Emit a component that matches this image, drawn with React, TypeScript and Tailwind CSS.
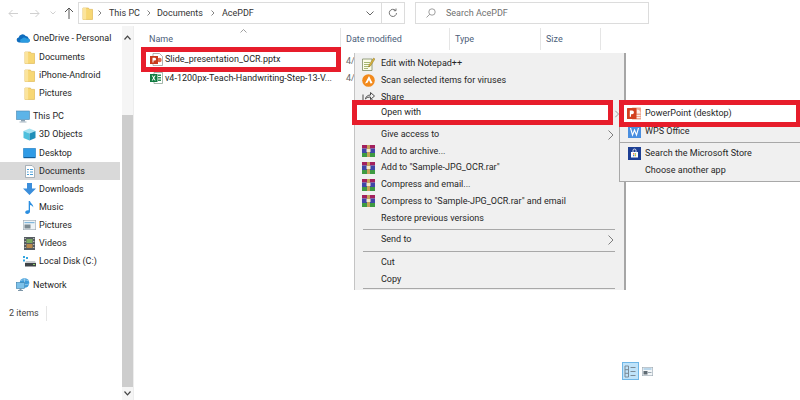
import React from "react";

const Folder = () => (
  <svg width="11" height="13" viewBox="0 0 12 14" className="shrink-0">
    <path d="M1 1h6l1 1.500h3.500v11H1z" fill="#f7d774" stroke="#dcb44f" strokeWidth="0.700" />
    <path d="M1 1h3.500v12.500H1z" fill="#fbe49c" />
  </svg>
);
const Cloud = () => (
  <svg width="14" height="10" viewBox="0 0 14 10" className="shrink-0">
    <path d="M3 9.500a2.600 2.600 0 0 1-.4-5.100A4 4 0 0 1 9.700 3a2.800 2.800 0 0 1 2.900 2.500A2.100 2.100 0 0 1 12 9.500z" fill="#0f6cbd" />
    <path d="M6 9.500a1.900 1.900 0 0 1 0-3.800c1-1.600 3.500-1.700 4.500-.2 1.500-.5 3.500.6 3.200 2.300-.2 1-.8 1.700-1.700 1.700z" fill="#2a9be0" />
  </svg>
);
const Monitor = () => (
  <svg width="14" height="13" viewBox="0 0 14 13" className="shrink-0">
    <rect x="0.500" y="1" width="13" height="8.500" fill="#5db4e8" stroke="#4a86b0" strokeWidth="0.600" />
    <path d="M5 10h4v1.500H5z" fill="#8aa0b0" />
    <path d="M3.500 11.500h7V12.500h-7z" fill="#a7b6c2" />
  </svg>
);
const Cube = () => (
  <svg width="13" height="13" viewBox="0 0 13 13" className="shrink-0">
    <path d="M6.500.5l6 2.500-6 2.500L.5 3z" fill="#a5e3f2" />
    <path d="M.5 3l6 2.500v7L.5 10z" fill="#4fc0dd" />
    <path d="M12.500 3l-6 2.500v7l6-2.500z" fill="#1f8fb8" />
  </svg>
);
const DesktopIcon = () => (
  <svg width="13" height="11" viewBox="0 0 13 11" className="shrink-0">
    <rect x="0.300" y="0.300" width="12.400" height="9.600" rx="0.600" fill="#2f9be6" stroke="#1c6fb0" strokeWidth="0.500" />
    <path d="M1 9h11v1H1z" fill="#155c95" />
  </svg>
);
const DocIcon = () => (
  <svg width="10" height="13" viewBox="0 0 10 13" className="shrink-0">
    <path d="M.5.500h6.500l2.500 2.500v9.500H.5z" fill="#fff" stroke="#8d99a3" strokeWidth="0.700" />
    <path d="M2 4h2v1H2zM5 4h3v1H5zM2 6.500h1.500v1H2zM5 6.500h3v1H5zM2 9h2v1H2zM5 9h3v1H5z" fill="#4a9fd8" />
  </svg>
);
const DownIcon = () => (
  <svg width="13" height="12" viewBox="0 0 13 12" className="shrink-0">
    <path d="M4 0h5v5.500h4L6.500 12 0 5.500h4z" fill="#3b8edb" />
  </svg>
);
const MusicIcon = () => (
  <svg width="10" height="13" viewBox="0 0 10 13" className="shrink-0">
    <path d="M3.700 0h1.300c.2 2.300 3.800 3.300 3.200 6.500C7.800 5 6.300 4.300 5 4.100V10.500C5 12 3.600 13 2.200 13 1 13 .2 12.300.2 11.300.2 10 1.600 9.200 3 9.200c.3 0 .5 0 .7.100z" fill="#2b8ee0" />
  </svg>
);
const PicIcon = () => (
  <svg width="13" height="10" viewBox="0 0 13 10" className="shrink-0">
    <rect x="0.300" y="0.300" width="12.400" height="9.400" fill="#eef3f6" stroke="#9aa7b1" strokeWidth="0.600" />
    <path d="M1.500 2h10v1.200h-10z" fill="#7fb6dc" />
    <path d="M1.500 4.500h6v4h-6z" fill="#7c8a92" />
  </svg>
);
const VideoIcon = () => (
  <svg width="11" height="13" viewBox="0 0 11 13" className="shrink-0">
    <rect width="11" height="13" fill="#565c61" />
    <rect x="2.500" y="2" width="6" height="4" fill="#7aa860" />
    <rect x="2.500" y="7" width="6" height="4" fill="#b98a4e" />
    <path d="M.7 1h1v1h-1zM.7 4h1v1h-1zM.7 7h1v1h-1zM.7 10h1v1h-1zM9.300 1h1v1h-1zM9.300 4h1v1h-1zM9.300 7h1v1h-1zM9.300 10h1v1h-1z" fill="#ddd" />
  </svg>
);
const DiskIcon = () => (
  <svg width="13" height="11" viewBox="0 0 13 11" className="shrink-0">
    <path d="M0 0h2v2H0zM3 1h2v2H3zM0 3.500h2v2H0z" fill="#35a6e0" />
    <path d="M3 5h9l1 2H2z" fill="#c9cdd0" />
    <path d="M2 7h11v3.500H2z" fill="#3e4347" />
    <path d="M10 8h2v1h-2z" fill="#8ed06c" />
  </svg>
);
const NetworkIcon = () => (
  <svg width="14" height="14" viewBox="0 0 14 14" className="shrink-0">
    <circle cx="8.500" cy="5" r="4.800" fill="#3f9bd8" />
    <path d="M5 2.500c2-1 5-1 7.500.5M4 6c3 1 6 1 9 0M8.500.5v9" stroke="#bfe3f7" strokeWidth="0.600" fill="none" />
    <rect x="0.300" y="4.500" width="8" height="6" fill="#7cc1ea" stroke="#3a7fab" strokeWidth="0.600" />
    <path d="M3.500 10.500h2V12h1.500v1H2v-1h1.500z" fill="#7d96a8" />
  </svg>
);
const PptIcon = () => (
  <svg width="13" height="13" viewBox="0 0 13 13" className="shrink-0">
    <path d="M3 .5h6.500L12.500 3.500v9H3z" fill="#fff" stroke="#8f8f8f" strokeWidth="0.700" />
    <circle cx="9.500" cy="7" r="2.200" fill="#e0694a" />
    <rect x="0" y="3" width="8" height="8" fill="#c8391b" />
    <path d="M2.500 4.800h2.200a1.300 1.300 0 0 1 0 2.700H3.500V9.500h-1z" fill="#fff" />
  </svg>
);
const XlsIcon = () => (
  <svg width="13" height="12" viewBox="0 0 13 12" className="shrink-0">
    <path d="M4 .5h8.500v11H4z" fill="#fff" stroke="#7f9a88" strokeWidth="0.700" />
    <path d="M8 2.500h3v1.500H8zM8 5h3v1.500H8zM8 7.500h3V9H8z" fill="#2f8f57" />
    <rect x="0" y="2" width="7.500" height="8" fill="#107c41" />
    <path d="M1.700 3.500h1l1 1.500 1-1.500h1L4.200 6l1.500 2.500h-1l-1-1.600-1 1.600h-1L3.200 6z" fill="#fff" />
  </svg>
);
const NotepadIcon = () => (
  <svg width="13" height="14" viewBox="0 0 13 14" className="shrink-0">
    <path d="M.5 2h9.500v11.500H.5z" fill="#fafbe8" stroke="#6f7d4f" strokeWidth="0.700" />
    <path d="M2 5h6v.8H2zM2 7h6v.8H2zM2 9h6v.8H2zM2 11h4v.8H2z" fill="#8aa04a" />
    <path d="M7 8l4.500-7 1.500 1-4.500 7-2 1z" fill="#d9b53c" stroke="#7a6320" strokeWidth="0.400" />
  </svg>
);
const AvastIcon = () => (
  <svg width="13" height="13" viewBox="0 0 13 13" className="shrink-0">
    <circle cx="6.500" cy="6.500" r="6.300" fill="#f28a1c" />
    <path d="M7 2L3 9.500l2.500-.8L7 6l1.500 3.500L10.500 9z" fill="#fff" />
  </svg>
);
const ShareIcon = () => (
  <svg width="13" height="12" viewBox="0 0 13 12" className="shrink-0" fill="none" stroke="#4b4b4b" strokeWidth="1">
    <path d="M1 3.500v8h9V8" />
    <path d="M3.500 8c.3-2.500 2.500-4 5-4V1.500L12.500 5l-4 3.500V6c-2 0-3.800.5-5 2z" />
  </svg>
);
const RarIcon = () => (
  <svg width="13" height="12" viewBox="0 0 13 12" className="shrink-0">
    <rect x="0" y="0" width="13" height="3.500" fill="#a3205c" />
    <rect x="0" y="3.500" width="13" height="4.500" fill="#3f46a8" />
    <rect x="0" y="8" width="13" height="4" fill="#3e9a42" />
    <rect x="5" y="0" width="3" height="12" fill="#c8a25a" />
    <rect x="4.500" y="4" width="4" height="3" fill="#f4e9c8" />
  </svg>
);
const PowerPointBig = () => (
  <svg width="14" height="13" viewBox="0 0 14 13" className="shrink-0">
    <rect x="5" y="0.500" width="9" height="12" rx="0.500" fill="#f0a58d" />
    <path d="M9.500 2.500A4 4 0 0 1 13.500 6.500H9.500z" fill="#fff" opacity="0.800" />
    <path d="M9 8h4.500v1H9zM9 10h4.500v1H9z" fill="#fff" opacity="0.800" />
    <rect x="0" y="1" width="9.500" height="11" rx="0.500" fill="#d2401f" />
    <path d="M2.800 3.500h2.300a1.800 1.800 0 0 1 0 3.700H4V9.800H2.800z" fill="#fff" />
  </svg>
);
const WpsIcon = () => (
  <svg width="13" height="13" viewBox="0 0 13 13" className="shrink-0">
    <rect width="13" height="13" fill="#4a8fe0" />
    <path d="M2.500 3l2 7 2-5 2 5 2-7" stroke="#fff" strokeWidth="1.100" fill="none" />
  </svg>
);
const StoreIcon = () => (
  <svg width="13" height="13" viewBox="0 0 13 13" className="shrink-0">
    <rect width="13" height="13" fill="#1d3f94" />
    <path d="M3 5h7v5.500H3z" fill="#fff" />
    <path d="M5 5V3.500a1.500 1.500 0 0 1 3 0V5" stroke="#fff" strokeWidth="0.800" fill="none" />
    <path d="M5 6.300h1.300v1.300H5z" fill="#e8572a" />
    <path d="M6.800 6.300h1.300v1.300H6.800z" fill="#79b82e" />
    <path d="M5 8h1.300v1.300H5z" fill="#2f8ee0" />
    <path d="M6.800 8h1.300v1.300H6.800z" fill="#f2b81f" />
  </svg>
);
const Chev = () => (
  <svg width="6" height="10" viewBox="0 0 6 10" fill="none" stroke="#6f6f6f" strokeWidth="0.900" className="shrink-0">
    <path d="M.5.500L5 5 .5 9.500" />
  </svg>
);
const Crumb = ({ cls }: { cls: string }) => (
  <svg className={cls} width="4" height="6" viewBox="0 0 4 6" fill="none" stroke="#777" strokeWidth="0.900">
    <path d="M.5.500L3 3 .5 5.500" />
  </svg>
);

function NavRow({ icon, label, indent, active, extra }: { icon: React.ReactNode; label: string; indent?: boolean; active?: boolean; extra?: string }) {
  return (
    <div className={`flex h-[18px] items-center gap-[3px] ${active ? "bg-[#d9d9d9]" : ""} ${indent ? "pl-[23px]" : "pl-[16px]"} ${extra ?? ""}`}>
      <span className={`flex shrink-0 justify-center ${indent ? "w-[13px]" : "w-[14px]"}`}>{icon}</span>
      <span className="whitespace-nowrap">{label}</span>
    </div>
  );
}

function MenuRow({ icon, label, chev }: { icon?: React.ReactNode; label: string; chev?: boolean }) {
  return (
    <div className="flex h-[16.7px] items-center">
      <span className="flex w-[26px] shrink-0 justify-center pl-[1px]">{icon}</span>
      <span className="whitespace-nowrap">{label}</span>
      {chev && <span className="ml-auto mr-[10px] flex"><Chev /></span>}
    </div>
  );
}

const Sep = ({ cls }: { cls: string }) => <div className={`ml-[8px] mr-[9px] h-px bg-[#a8a8a8] ${cls}`} />;

export default function App() {
  return (
    <div className="relative flex h-[400px] w-[800px] flex-col overflow-hidden bg-white font-['Roboto','Noto_Sans',sans-serif] text-[9px] leading-none text-[#262626]">
      {/* toolbar */}
      <div className="flex h-[26px] shrink-0 items-start pt-[2px]">
        <div className="flex h-[22px] w-[78px] items-center pl-[8px]">
          <svg width="10" height="9" viewBox="0 0 10 9" fill="none" stroke="#d0d0d0" strokeWidth="1"><path d="M10 4.500H1M4.500 1L1 4.500 4.500 8" /></svg>
          <svg className="ml-[12px]" width="10" height="9" viewBox="0 0 10 9" fill="none" stroke="#d0d0d0" strokeWidth="1"><path d="M0 4.500h9M5.500 1L9 4.500 5.500 8" /></svg>
          <svg className="ml-[10px]" width="6" height="4" viewBox="0 0 6 4" fill="none" stroke="#d0d0d0" strokeWidth="1"><path d="M.5.500L3 3 5.500.5" /></svg>
          <svg className="ml-[8px]" width="10" height="12" viewBox="0 0 10 12" fill="none" stroke="#555" strokeWidth="1"><path d="M5 12V1M1 5l4-4 4 4" /></svg>
        </div>
        <div className="flex h-[22px] w-[304px] items-center border border-[#dcdcdc] pl-[3px]">
          <Folder />
          <Crumb cls="ml-[5px]" />
          <span className="ml-[7px] text-[#333]">This PC</span>
          <Crumb cls="ml-[7px]" />
          <span className="ml-[6px] text-[#333]">Documents</span>
          <Crumb cls="ml-[8px]" />
          <span className="ml-[7px] text-[#333]">AcePDF</span>
          <svg className="ml-auto mr-[7px]" width="8" height="5" viewBox="0 0 8 5" fill="none" stroke="#666" strokeWidth="1"><path d="M.5.500L4 4 7.500.5" /></svg>
        </div>
        <div className="flex h-[22px] w-[23px] items-center justify-center border-y border-r border-[#dcdcdc]">
          <svg width="10" height="10" viewBox="0 0 10 10" fill="none" stroke="#666" strokeWidth="0.900"><path d="M8.500 5a3.600 3.600 0 1 1-1-2.600M8 .5v2.200H5.800" /></svg>
        </div>
        <div className="ml-[10px] flex h-[22px] w-[234px] items-center border border-[#dcdcdc] pl-[10px] text-[#6f6f6f]">
          <svg width="10" height="10" viewBox="0 0 10 10" fill="none" stroke="#888" strokeWidth="0.800"><circle cx="6" cy="4" r="3.200" /><path d="M3.700 6.300L.5 9.500" /></svg>
          <span className="ml-[10px]">Search AcePDF</span>
        </div>
      </div>

      {/* body */}
      <div className="flex min-h-0 flex-1">
        <aside className="flex w-[134px] shrink-0 border-r border-[#ededed]">
          <div className="w-[120px] shrink-0 pt-[3px]">
            <NavRow icon={<Cloud />} label="OneDrive - Personal" />
            <div className="mt-px" />
            <NavRow indent icon={<Folder />} label="Documents" />
            <NavRow indent icon={<Folder />} label="iPhone-Android" />
            <NavRow indent icon={<Folder />} label="Pictures" />
            <NavRow icon={<Monitor />} label="This PC" extra="mt-[5px]" />
            <NavRow indent icon={<Cube />} label="3D Objects" />
            <NavRow indent icon={<DesktopIcon />} label="Desktop" extra="mt-px" />
            <NavRow indent active icon={<DocIcon />} label="Documents" />
            <NavRow indent icon={<DownIcon />} label="Downloads" />
            <NavRow indent icon={<MusicIcon />} label="Music" />
            <NavRow indent icon={<PicIcon />} label="Pictures" />
            <NavRow indent icon={<VideoIcon />} label="Videos" />
            <NavRow indent icon={<DiskIcon />} label="Local Disk (C:)" />
            <NavRow icon={<NetworkIcon />} label="Network" extra="mt-[6px]" />
            <div className="mt-[10px] flex h-[18px] items-center pl-[9px] text-[#444]">
              <span className="border-r border-[#e5e5e5] py-[3px] pr-[7px]">2 items</span>
            </div>
          </div>
          <div className="ml-[2px] flex w-[11px] flex-col bg-[#f5f5f5]">
            <div className="flex h-[17px] items-end justify-center pb-[3px]">
              <svg width="7" height="5" viewBox="0 0 7 5" fill="none" stroke="#444" strokeWidth="1.200"><path d="M.5 4.500L3.500 1.200l3 3.300" /></svg>
            </div>
            <div className="mt-[72px] h-[272px] bg-[#cdcdcd]" />
            <div className="flex flex-1 items-center justify-center">
              <svg width="7" height="5" viewBox="0 0 7 5" fill="none" stroke="#444" strokeWidth="1.200"><path d="M.5.500l3 3.300 3-3.300" /></svg>
            </div>
          </div>
        </aside>

        <main className="relative min-w-0 flex-1">
          {/* header */}
          <div className="relative mt-[2px] flex h-[22px] items-center text-[#4c607a]">
            <svg className="absolute left-[106px] top-[1px]" width="7" height="4" viewBox="0 0 7 4" fill="none" stroke="#888" strokeWidth="0.800"><path d="M.5 3.500L3.500.5l3 3" /></svg>
            <div className="flex h-full w-[207px] items-center border-r border-[#e5e5e5] pl-[15px]">Name</div>
            <div className="flex h-full w-[109px] items-center border-r border-[#e5e5e5] pl-[5px]">Date modified</div>
            <div className="flex h-full w-[91px] items-center border-r border-[#e5e5e5] pl-[5px]">Type</div>
            <div className="flex h-full w-[60px] items-center border-r border-[#e5e5e5] pl-[5px]">Size</div>
          </div>
          {/* rows */}
          <div className="relative mt-[3px] flex h-[17px] items-center">
            <div className="absolute left-[7px] top-[-6px] flex h-[25px] w-[200px] items-center border-[5px] border-[#e71d2b] bg-white pl-[4px]">
              <PptIcon />
              <span className="ml-[2px] whitespace-nowrap">Slide_presentation_OCR.pptx</span>
            </div>
            <span className="ml-[212px] text-[#666]">4/</span>
          </div>
          <div className="flex h-[16px] items-center">
            <div className="flex w-[207px] items-center pl-[16px]">
              <XlsIcon />
              <span className="ml-[2px] whitespace-nowrap">v4-1200px-Teach-Handwriting-Step-13-V...</span>
            </div>
            <span className="ml-[5px] text-[#666]">4/</span>
          </div>

          {/* view toggle */}
          <div className="absolute left-[488px] top-[336px] flex items-center gap-[3px]">
            <div className="flex h-[18px] w-[17px] items-center justify-center border border-[#6fb6e6] bg-[#bfe3fa]">
              <svg width="13" height="13" viewBox="0 0 13 13" fill="none" stroke="#7b8a96" strokeWidth="1"><path d="M1 1h3.500v11H1zM1 4.700h3.500M1 8.300h3.500M6.500 2.500h5M6.500 6.500h5M6.500 10.500h5" /></svg>
            </div>
            <svg width="11" height="9" viewBox="0 0 11 9"><rect x="0.300" y="0.300" width="10.400" height="8.400" fill="#f3f6f8" stroke="#9aa7b1" strokeWidth="0.600" /><path d="M1.500 1.500h8v1h-8z" fill="#7fb6dc" /><path d="M1.500 4h4v3.500h-4z" fill="#5f6b73" /><path d="M6 5h3.500v1H6z" fill="#9aa7b1" /></svg>
          </div>
        </main>
      </div>

      {/* context menu */}
      <div className="absolute left-[354px] top-[53px] w-[272px] border-l border-r-2 border-l-[#c4c4c4] border-r-[#a6a6a6] bg-[#f0f0f0] pt-[2.500px]">
        <MenuRow icon={<NotepadIcon />} label="Edit with Notepad++" />
        <MenuRow icon={<AvastIcon />} label="Scan selected items for viruses" />
        <MenuRow icon={<ShareIcon />} label="Share" />
        <div className="relative h-[16.7px]">
          <div className="absolute left-[-3px] top-[-5.500px] flex h-[25px] w-[261px] items-center border-[5px] border-[#e71d2b] bg-white pl-[24px]">Open with</div>
          <span className="absolute left-[259px] top-[3px] flex scale-75"><Chev /></span>
        </div>
        <div className="mt-[4px]" />
        <MenuRow label="Give access to" chev />
        <MenuRow icon={<RarIcon />} label="Add to archive..." />
        <MenuRow icon={<RarIcon />} label={'Add to "Sample-JPG_OCR.rar"'} />
        <MenuRow icon={<RarIcon />} label="Compress and email..." />
        <MenuRow icon={<RarIcon />} label={'Compress to "Sample-JPG_OCR.rar" and email'} />
        <MenuRow label="Restore previous versions" />
        <Sep cls="mt-[3px] mb-[1px]" />
        <MenuRow label="Send to" chev />
        <Sep cls="mt-[3px] mb-[2px]" />
        <MenuRow label="Cut" />
        <MenuRow label="Copy" />
        <Sep cls="mt-[1px] mb-[1px]" />
      </div>

      {/* submenu */}
      <div className="absolute left-[619px] top-[100px] w-[181px] border-l border-b border-[#a8a8a8] bg-[#f0f0f0] pb-[3px] pt-[23px]">
        <div className="absolute left-[-1px] top-0 flex h-[27px] w-[182px] items-center border-[5px] border-[#e71d2b] bg-white pl-[3px]">
          <PowerPointBig />
          <span className="ml-[4px] whitespace-nowrap">PowerPoint (desktop)</span>
        </div>
        <div className="flex h-[16px] items-center pl-[8px]">
          <WpsIcon />
          <span className="ml-[4px]">WPS Office</span>
        </div>
        <div className="mt-[3px] mb-[2px] h-px bg-[#a8a8a8]" />
        <div className="flex h-[17px] items-center pl-[8px]">
          <StoreIcon />
          <span className="ml-[4px]">Search the Microsoft Store</span>
        </div>
        <div className="flex h-[16px] items-center pl-[25px]">Choose another app</div>
      </div>
    </div>
  );
}
